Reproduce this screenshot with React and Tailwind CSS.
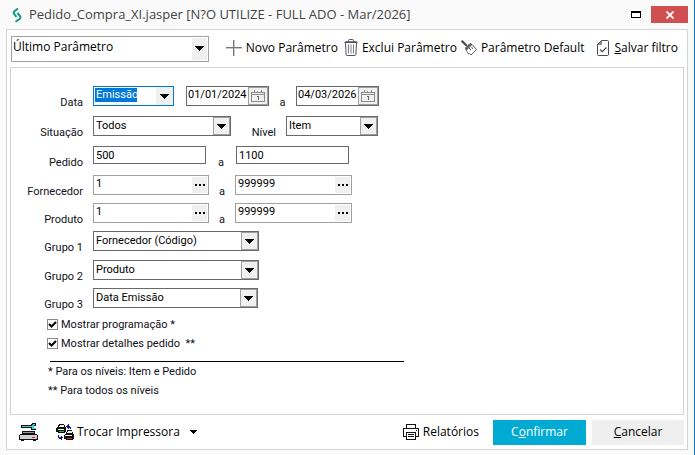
import React from 'react';

const LogoIcon = () => (
    <svg width="10" height="16" viewBox="0 0 10 16" fill="none" stroke="#14997f" strokeWidth="2">
        <path d="M6 1.500 2.500 4.200Q1 5.700 2.300 7.200L4.500 10" />
        <path d="M5.500 6 8 9Q9 10.500 7.800 11.800L3.500 14.800" />
    </svg>
);

const PlusIcon = () => (
    <svg width="16" height="16" viewBox="0 0 16 16" shapeRendering="crispEdges" fill="#77757d">
        <path d="M0 7h16v1H0zM7 0h1v16H7z" />
        <path d="M0 8h16v1H0zM8 0h1v16H8z" fillOpacity=".4" />
    </svg>
);

const TrashIcon = () => (
    <svg width="14" height="17" viewBox="0 0 14 17" fill="none" stroke="#55535a">
        <path d="M.5 3.500h13M4.500 3V1.500q0-1 1-1h3q1 0 1 1V3M1.500 4l.6 11.500q.1 1 1 1h7.800q.9 0 1-1L12.500 4" />
        <path d="M4.500 5.500v9M7 5.500v9M9.500 5.500v9M1 2.500h12" strokeOpacity=".75" />
    </svg>
);

const BrushIcon = () => (
    <svg width="16" height="16" viewBox="0 0 16 16" fill="none" stroke="#4a484e">
        <path d="M.6.8 5.800 5.800" strokeWidth="2.200" />
        <path d="M4.500 8 9 3.500l2 1L5.200 10.200z" fill="#6a686e" />
        <path d="M11 4.500 15.500 9.500 10 15 8.500 13.500 7.500 14 6.500 12.200 5.200 10.500M8 8l2 2M10.500 7l1.500 2" strokeWidth=".9" />
    </svg>
);

const SaveIcon = () => (
    <svg width="12" height="16" viewBox="0 0 12 16" fill="none" stroke="#4a484e">
        <path d="M4.500.5h6q1 0 1 1v13q0 1-1 1h-9q-1 0-1-1v-10z" />
        <path d="M.5 4.500h4v-4z" fill="#8a8890" strokeOpacity=".5" />
        <path d="m3 9.500 2.200 2.200L9.500 7.500" strokeWidth="1.200" />
    </svg>
);

const CalendarIcon = () => (
    <svg width="14" height="12" viewBox="0 0 14 12" shapeRendering="crispEdges" fill="none" stroke="#8b8b8b">
        <path d="M.5 2.500h13v9H.5zM1 4.500h12" />
        <path d="M3.500 0v3M6.500 1v1M10.500 0v3" />
        <path d="M6 6.500h1M7.500 6v4" stroke="#666" />
    </svg>
);

const ToolsIcon = () => (
    <svg width="19" height="18" viewBox="0 0 19 18" shapeRendering="crispEdges">
        <path d="M2 2h10v3H2zM12 1h2v6h-2zM13 0h4v3h-4zM13 5h4v2h-4z" fill="#111" />
        <path d="M3 3h10v1H3zM13 2h2v4h-2zM14 1h2v1h-2zM14 5h3v1h-3z" fill="#36d5dc" />
        <path d="M3 8h13v4H3z" fill="#111" />
        <path d="M4 9h11v1H4z" fill="#999" />
        <path d="M1 11h17v1H1zM0 12h19v5H0zM2 17h3v1H2zM14 17h3v1h-3z" fill="#111" />
        <path d="M1 12h17v4H1z" fill="#cfcfcf" />
        <path d="M13 14h3v1h-3z" fill="#e02020" />
    </svg>
);

const SwapPrinterIcon = () => (
    <svg width="18" height="17" viewBox="0 0 18 17" shapeRendering="crispEdges">
        <path d="M3 0h5v1h1v2h1v5H9v1H2V8H0V4h1V3h1z" fill="#111" />
        <path d="M4 1h4v2H3zM2 5h6v1H2z" fill="#eee" />
        <path d="M3 7h5v1H3z" fill="#20b04b" />
        <path d="M11 6h5v2h1v2h1v5h-1v1h-7v-1H8v-4h1v-1h1z" fill="#111" />
        <path d="M12 7h4v2h-5zM9 11h7v1H9z" fill="#eee" />
        <path d="M11 14h5v1h-5z" fill="#e02020" />
        <path d="M10 2h1V1h1V0h1v2h1v1h1v2h-1V4h-1v1h-1V4h-1V3h-1zM2 11h1v2h2v-1h1v1h1v1H6v2H5v-1H3v-1H2z" fill="#1a1a9c" />
    </svg>
);

const PrinterIcon = () => (
    <svg width="16" height="16" viewBox="0 0 16 16" shapeRendering="crispEdges" fill="none" stroke="#111">
        <path d="M3.500 5V.5h9V5M3 12.500H.5v-8h15v8H13M3.500 8.500h9v7h-9zM5 10.500h6M5 12.500h6M13 6.500h1" />
    </svg>
);

const Arrow = () => (
    <svg width="9" height="5" viewBox="0 0 9 5" shapeRendering="crispEdges">
        <path d="M0 0h9v1H8v1H7v1H6v1H5v1H4V4H3V3H2V2H1V1H0z" fill="#000" />
    </svg>
);

const fieldFont = 'font-[Roboto,sans-serif] text-[11px] leading-4';

const Select = ({ id, label, value, className, active }) => (
    <div className={`relative h-5 border bg-white ${active ? 'border-[#0078d7]' : 'border-[#696969]'} ${className}`}>
        {active && <span className="absolute left-px top-px h-[14px] w-[42px] bg-[#0078d7]" />}
        <select
            id={id}
            aria-label={label}
            className={`relative block h-full w-full appearance-none bg-transparent pl-0.5 outline-none ${fieldFont} ${active ? 'pb-0.5 text-white' : 'text-black'}`}
        >
            <option>{value}</option>
        </select>
        <span className={`pointer-events-none absolute inset-y-0 right-0 flex w-[17px] items-center justify-center bg-[#f0f0f0] ${active ? '' : 'border border-[#a0a0a0]'}`}>
            <Arrow />
        </span>
    </div>
);

const DateField = ({ id, label, value }) => (
    <div className="flex h-5 w-[83px] border border-[#696969] bg-white">
        <input id={id} aria-label={label} defaultValue={value} className={`min-w-0 flex-1 pl-px pb-0.5 text-black outline-none ${fieldFont}`} />
        <button type="button" aria-label={`Calendário ${label}`} className="flex w-5 items-center justify-center border border-[#a0a0a0] bg-[#f0f0f0]">
            <CalendarIcon />
        </button>
    </div>
);

const LookupField = ({ id, label, value, className }) => (
    <div className={`flex h-5 border border-[#a0a0a0] bg-white p-px ${className}`}>
        <input id={id} aria-label={label} defaultValue={value} className={`min-w-0 flex-1 pb-0.5 pl-px text-black outline-none ${fieldFont}`} />
        <button type="button" aria-label={`Buscar ${label}`} className="flex w-[15px] items-center justify-center gap-0.5 bg-[#f0f0f0]">
            <span className="size-0.5 bg-black" />
            <span className="size-0.5 bg-black" />
            <span className="size-0.5 bg-black" />
        </button>
    </div>
);

const TextField = ({ id, label, value }) => (
    <input
        id={id}
        aria-label={label}
        defaultValue={value}
        className={`h-[18px] w-[113px] border border-[#696969] bg-white pl-0.5 text-black outline-none ${fieldFont}`}
    />
);

const Row = ({ label, htmlFor, children, className }) => (
    <div className={`flex h-5 items-start ${className}`}>
        <label htmlFor={htmlFor} className="mr-2.5 w-[72px] pt-[9px] text-right">{label}</label>
        {children}
    </div>
);

const To = ({ className }) => <span className={`pt-[9px] text-center ${className}`}>a</span>;

const Check = ({ id, children }) => (
    <div className="flex h-[19px] items-center gap-[3px]">
        <span className="relative flex size-[11px]">
            <input id={id} type="checkbox" defaultChecked className="peer size-[11px] appearance-none border border-[#8a8a8a] bg-white" />
            <svg className="pointer-events-none absolute inset-0 hidden peer-checked:block" width="11" height="11" viewBox="0 0 11 11" fill="none" stroke="#000" strokeWidth="2">
                <path d="m2 5 2.500 2.500L9 3" />
            </svg>
        </span>
        <label htmlFor={id} className="whitespace-pre">{children}</label>
    </div>
);

const ToolButton = ({ icon: Icon, children, className }) => (
    <button className={`flex items-center whitespace-nowrap ${className}`}>
        <Icon />
        <span>{children}</span>
    </button>
);

const App = () => {
    const groups = [
        { label: 'Grupo 1', value: 'Fornecedor (Código)', row: 'mt-2', width: 'w-[166px]' },
        { label: 'Grupo 2', value: 'Produto', row: 'mt-[9px]', width: 'w-[166px]' },
        { label: 'Grupo 3', value: 'Data Emissão', row: 'mt-2', width: 'w-[165px]' },
    ];

    return (
        <div className="flex min-h-screen flex-col border-r border-[#0078d7] bg-[#fafafa] pb-[5px] pl-1.5 pr-1.5 font-['Open_Sans',sans-serif] text-xs text-black">
            <header className="flex h-[29px] items-center pl-1.5">
                <LogoIcon />
                <h1 className="ml-[7px] flex-1 whitespace-nowrap text-[13px] text-[#444]">Pedido_Compra_XI.jasper [N?O UTILIZE - FULL ADO - Mar/2026]</h1>
                <button aria-label="Maximizar" className="mr-2.5 h-[7px] w-[10px] border border-t-2 border-black" />
                <button aria-label="Fechar" className="flex h-[17px] w-[37px] items-center justify-center bg-[#d05052]">
                    <svg width="8" height="8" viewBox="0 0 8 8" stroke="#fff" strokeWidth="1.800">
                        <path d="m.5.5 7 7M7.500.5l-7 7" />
                    </svg>
                </button>
            </header>

            <main className="flex flex-1 flex-col border border-[#d4d4d4] bg-white px-[3px]">
                <div className="flex h-[37px] items-center justify-between pl-px pr-1.5">
                    <div className="relative h-[26px] w-[198px] border border-[#a0a0a0]">
                        <select aria-label="Parâmetro" className="block h-full w-full appearance-none bg-transparent pb-1 pl-px outline-none">
                            <option>Último Parâmetro</option>
                        </select>
                        <span className="pointer-events-none absolute inset-y-px right-px flex w-[15px] items-center justify-center bg-[#f0f0f0]">
                            <Arrow />
                        </span>
                    </div>
                    <div className="flex items-center pb-0.5">
                        <ToolButton icon={PlusIcon} className="mr-1.5 gap-1">Novo Parâmetro</ToolButton>
                        <ToolButton icon={TrashIcon} className="mr-1 gap-1">Exclui Parâmetro</ToolButton>
                        <ToolButton icon={BrushIcon} className="mr-3 gap-1">Parâmetro Default</ToolButton>
                        <ToolButton icon={SaveIcon} className="gap-1.5"><u>S</u>alvar filtro</ToolButton>
                    </div>
                </div>

                <form className="flex-1 border border-[#d4d4d4] pt-[18px] font-[Roboto,sans-serif] text-[11px] leading-4 text-[#101020]">
                    <Row label="Data" htmlFor="data" className="">
                        <Select id="data" value="Emissão" className="mr-3 w-[81px]" active />
                        <DateField id="de" label="Data inicial" value="01/01/2024" />
                        <To className="w-[27px]" />
                        <DateField id="ate" label="Data final" value="04/03/2026" />
                    </Row>
                    <Row label="Situação" htmlFor="situacao" className="mt-2.5">
                        <Select id="situacao" value="Todos" className="w-[138px]" />
                        <label htmlFor="nivel" className="w-[45px] pt-[9px] text-right">Nível</label>
                        <Select id="nivel" value="Item" className="ml-2.5 w-[92px]" />
                    </Row>
                    <Row label="Pedido" htmlFor="pedido" className="mt-2.5">
                        <TextField id="pedido" value="500" />
                        <To className="w-[30px]" />
                        <TextField label="Pedido final" value="1100" />
                    </Row>
                    <Row label="Fornecedor" htmlFor="fornecedor" className="mt-[9px]">
                        <LookupField id="fornecedor" label="Fornecedor inicial" value="1" className="w-[116px]" />
                        <To className="w-[26px]" />
                        <LookupField label="Fornecedor final" value="999999" className="w-[117px]" />
                    </Row>
                    <Row label="Produto" htmlFor="produto" className="mt-2">
                        <LookupField id="produto" label="Produto inicial" value="1" className="w-[116px]" />
                        <To className="w-[26px]" />
                        <LookupField label="Produto final" value="999999" className="w-[117px]" />
                    </Row>
                    {groups.map((g) => (
                        <Row key={g.label} label={g.label} htmlFor={g.label} className={g.row}>
                            <Select id={g.label} value={g.value} className={g.width} />
                        </Row>
                    ))}
                    <div className="pl-9 pt-[7px]">
                        <Check id="programacao">Mostrar programação *</Check>
                        <Check id="detalhes">Mostrar detalhes pedido  **</Check>
                    </div>
                    <hr className="ml-[39px] mt-2 w-[354px] border-black" />
                    <p className="ml-[37px] mt-0.5">* Para os níveis: Item e Pedido</p>
                    <p className="ml-[37px] mt-[3px]">** Para todos os níveis</p>
                </form>

                <footer className="flex h-[34px] items-center">
                    <button aria-label="Configurar impressora" className="ml-[9px] mr-[18px]">
                        <ToolsIcon />
                    </button>
                    <ToolButton icon={SwapPrinterIcon} className="gap-[3px]">Trocar Impressora</ToolButton>
                    <button aria-label="Escolher impressora" className="ml-2.5">
                        <svg width="7" height="4" viewBox="0 0 7 4" shapeRendering="crispEdges">
                            <path d="M0 0h7v1H6v1H5v1H4v1H3V3H2V2H1V1H0z" />
                        </svg>
                    </button>
                    <ToolButton icon={PrinterIcon} className="ml-auto mr-3.5 gap-1">Relatórios</ToolButton>
                    <button className="mr-1.5 h-[25px] w-[93px] bg-[#00aad2] text-white">C<u>o</u>nfirmar</button>
                    <button className="h-[25px] w-[92px] bg-[#efefef]"><u>C</u>ancelar</button>
                </footer>
            </main>
        </div>
    );
};

export default App;
